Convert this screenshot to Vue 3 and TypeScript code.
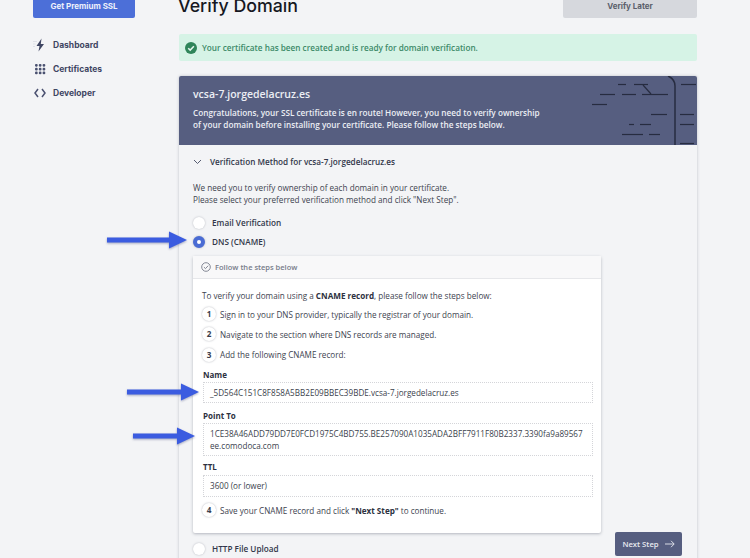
<script setup lang="ts">
const nav = ['Dashboard', 'Certificates', 'Developer']
const dots = [0, 1, 2].flatMap((r) => [0, 1, 2].map((c) => ({ x: 2 + c * 3.8, y: 2 + r * 3.8 })))
const artLines: [number, number, number, number][] = [
  [618, 84.5, 626, 84.5], [634, 84.5, 648, 84.5], [600, 94.5, 615, 94.5], [622, 94.5, 636, 94.5],
  [642, 94.5, 668, 94.5], [592, 104.5, 607, 104.5], [651, 114.5, 667, 114.5], [629, 124.5, 634, 124.5],
  [640, 124.5, 651, 124.5], [622, 134.5, 643, 134.5], [649, 134.5, 660, 134.5], [681, 84.5, 696, 84.5],
  [680, 114.5, 694, 114.5], [680, 124.5, 694, 124.5], [680, 143.5, 694, 143.5], [643, 85, 651, 94],
]
</script>

<template>
  <div class="page">
    <aside class="side">
      <div class="premium">Get Premium SSL</div>
      <nav class="nav">
        <div v-for="(item, i) in nav" :key="item" class="nav-item">
          <svg class="nav-icon" width="14" height="14" viewBox="0 0 14 14">
            <g v-if="i === 0">
              <path d="M8.500 0.500 3.500 8h3l-1 5.500L11 6H7.800z" fill="#3f4663" />
              <path d="M0 3.500h4M0 6h2.500M0 8.500h2" stroke="#dfe1e7" stroke-width="1.200" />
            </g>
            <g v-else-if="i === 1">
              <rect v-for="d in dots" :key="d.x + '-' + d.y" :x="d.x" :y="d.y" width="2.700" height="2.700" rx="1.100" fill="#4a5170" />
            </g>
            <g v-else fill="none" stroke="#4a5170" stroke-width="1.500">
              <path d="M5 3 2 7l3 4M9 3l3 4-3 4" />
            </g>
          </svg>
          <span>{{ item }}</span>
        </div>
      </nav>
    </aside>

    <main class="main">
      <div class="top">
        <h1>Verify Domain</h1>
        <div class="later">Verify Later</div>
      </div>

      <div class="alert">
        <svg width="12" height="12" viewBox="0 0 12 12">
          <circle cx="6" cy="6" r="6" fill="#2f855a" />
          <path d="M3.200 6.200 5.200 8.100 8.900 4.200" fill="none" stroke="#e6f7ef" stroke-width="1.500" />
        </svg>
        <span>Your certificate has been created and is ready for domain verification.</span>
      </div>

      <section class="card">
        <header class="hero">
          <h2>vcsa-7.jorgedelacruz.es</h2>
          <p>Congratulations, your SSL certificate is en route! However, you need to verify ownership<br />of your domain before installing your certificate. Please follow the steps below.</p>
          <svg class="art" width="518" height="69" viewBox="179 76 518 69">
            <g stroke="#272c40" stroke-width="1.200" fill="none">
              <line v-for="(l, i) in artLines" :key="i" :x1="l[0]" :y1="l[1]" :x2="l[2]" :y2="l[3]" />
              <path d="M668 76q7 3 7 10v59" stroke-width="1.500" />
            </g>
          </svg>
        </header>

        <div class="body">
          <div class="method">
            <svg width="9" height="6" viewBox="0 0 9 6"><path d="M1 1 4.500 4.500 8 1" fill="none" stroke="#555b70" stroke-width="1" /></svg>
            <span>Verification Method for vcsa-7.jorgedelacruz.es</span>
          </div>
          <p class="intro">We need you to verify ownership of each domain in your certificate.<br />Please select your preferred verification method and click "Next Step".</p>

          <label class="radio first"><i class="dot"></i>Email Verification</label>
          <label class="radio"><i class="dot on"></i>DNS (CNAME)</label>

          <div class="panel">
            <div class="panel-head">
              <svg width="10" height="10" viewBox="0 0 10 10">
                <circle cx="5" cy="5" r="4.300" fill="none" stroke="#777c8a" stroke-width="0.900" />
                <path d="M2.900 5.100 4.500 6.600 7.200 3.700" fill="none" stroke="#777c8a" stroke-width="0.900" />
              </svg>
              <span>Follow the steps below</span>
            </div>
            <div class="panel-body">
              <p class="lead">To verify your domain using a <b>CNAME record</b>, please follow the steps below:</p>
              <div class="step"><i>1</i><span>Sign in to your DNS provider, typically the registrar of your domain.</span></div>
              <div class="step"><i>2</i><span>Navigate to the section where DNS records are managed.</span></div>
              <div class="step"><i>3</i><span>Add the following CNAME record:</span></div>
              <div class="field-label name">Name</div>
              <div class="box">_5D564C151C8F858A5BB2E09BBEC39BDE.vcsa-7.jorgedelacruz.es</div>
              <div class="field-label point">Point To</div>
              <div class="box">1CE38A46ADD79DD7E0FCD1975C4BD755.BE257090A1035ADA2BFF7911F80B2337.3390fa9a89567<br />ee.comodoca.com</div>
              <div class="field-label">TTL</div>
              <div class="box">3600 (or lower)</div>
              <div class="step last"><i>4</i><span>Save your CNAME record and click <b>"Next Step"</b> to continue.</span></div>
            </div>
          </div>

          <div class="foot">
            <label class="radio"><i class="dot"></i>HTTP File Upload</label>
            <div class="next">
              Next Step
              <svg width="10" height="8" viewBox="0 0 10 8"><path d="M0 4h9M6 .8 9.200 4 6 7.200" fill="none" stroke="#e8eaf0" stroke-width="0.900" /></svg>
            </div>
          </div>
        </div>
      </section>
    </main>

    <svg class="arrow a1" width="82" height="20" viewBox="0 0 82 20"><path d="M1 7.500h62V1.500l18 8.500-18 8.500v-6H1z" fill="#3b5ce0" /></svg>
    <svg class="arrow a2" width="74" height="20" viewBox="0 0 74 20"><path d="M1 7.500h54V1.500l18 8.500-18 8.500v-6H1z" fill="#3b5ce0" /></svg>
    <svg class="arrow a3" width="64" height="20" viewBox="0 0 64 20"><path d="M1 7.500h44V1.500l18 8.500-18 8.500v-6H1z" fill="#3b5ce0" /></svg>
  </div>
</template>

<style>
html, body { margin: 0; background: #f3f4f6; }
</style>

<style scoped>
.page {
  position: relative;
  width: 750px;
  height: 558px;
  overflow: hidden;
  display: flex;
  background: #f3f4f6;
  font-family: "Open Sans", "Liberation Sans", sans-serif;
  color: #3b3f4d;
}
.side { width: 102px; margin-left: 33px; flex: none; }
.premium {
  height: 26px;
  margin-top: -8px;
  background: #4c6fd8;
  border-radius: 2px;
  color: #eef1fb;
  font: 700 8px/28px Inter, sans-serif;
  text-align: center;
}
.nav { margin-top: 19px; display: flex; flex-direction: column; gap: 8px; }
.nav-item {
  height: 16px;
  display: flex;
  align-items: center;
  gap: 6px;
  font: 700 8.500px/16px Inter, sans-serif;
  color: #3f4663;
}
.nav-icon { flex: none; }
.main { width: 518px; margin-left: 44px; flex: none; }
.top { display: flex; justify-content: space-between; height: 18px; }
h1 {
  margin: -9px 0 0 -1px;
  font: 500 17.800px/30px Inter, sans-serif;
  color: #16181f;
}
.later {
  width: 134px;
  height: 26px;
  margin-top: -8px;
  background: #d6d8dd;
  border-radius: 2px;
  color: #5b5f6b;
  font: 700 8px/28px Inter, sans-serif;
  text-align: center;
}
.alert {
  margin-top: 16px;
  height: 27px;
  display: flex;
  align-items: center;
  gap: 5px;
  padding-left: 6px;
  background: #d6f3e6;
  border-radius: 2px;
  color: #3c8a68;
  font-size: 8.200px;
  font-weight: 600;
}
.card {
  margin-top: 15px;
  background: #f3f4f6;
  box-shadow: 0 0 3px rgba(60, 65, 85, 0.3);
  height: 500px;
  border-radius: 2px;
}
.hero {
  position: relative;
  height: 69px;
  padding: 11px 14px 0;
  box-sizing: border-box;
  background: #565e80;
  border-radius: 2px 2px 0 0;
  color: #eceef4;
}
.hero h2 { margin: 0; font-size: 10.500px; font-weight: 600; line-height: 15px; }
.hero p { margin: 5px 0 0; font-size: 8.200px; font-weight: 600; line-height: 11.500px; }
.art { position: absolute; left: 0; top: 0; }
.body { padding: 0 14px; }
.method {
  height: 33px;
  display: flex;
  align-items: center;
  gap: 8px;
  font-size: 8.180px;
  font-weight: 600;
  color: #32374a;
}
.intro { margin: 4px 0 0; font-size: 8.170px; line-height: 12px; color: #40434f; }
.radio {
  height: 19px;
  display: flex;
  align-items: center;
  gap: 7px;
  font-size: 8.200px;
  font-weight: 600;
  color: #32374a;
}
.radio.first { margin-top: 7px; }
.dot {
  display: block;
  box-sizing: border-box;
  width: 12px;
  height: 12px;
  border-radius: 50%;
  background: #fff;
  box-shadow: 0 0 2px rgba(60, 65, 85, 0.35);
}
.dot.on { border: 4px solid #4a6cd4; }
.panel {
  width: 408px;
  margin-top: 5px;
  background: #fff;
  box-shadow: 0 1px 3px rgba(60, 65, 85, 0.35);
  border-radius: 2px;
}
.panel-head {
  height: 22px;
  display: flex;
  align-items: center;
  gap: 4px;
  padding-left: 8px;
  background: #f8f8f9;
  border-bottom: 1px solid #e6e7ea;
  color: #777c8a;
  font-size: 7.500px;
  font-weight: 600;
}
.panel-body { padding: 11px 9px 13px; font-size: 8.150px; color: #40434f; }
.lead { margin: 0 0 2px; line-height: 12px; }
.lead b, .step b { color: #2d3140; }
.step { height: 20.300px; display: flex; align-items: center; gap: 4px; }
.step i {
  width: 14px;
  height: 14px;
  flex: none;
  border-radius: 50%;
  background: #fff;
  box-shadow: 0 0 2px rgba(60, 65, 85, 0.4);
  font-style: normal;
  font-weight: 700;
  text-align: center;
  line-height: 14px;
  color: #3a3e4c;
}
.step.last { margin-top: 3px; }
.field-label {
  margin: 5px 0 3px 1px;
  font-size: 8px;
  font-weight: 700;
  line-height: 11px;
  color: #2d3140;
}
.field-label.name { margin: 4px 0 2px 1px; }
.field-label.point { margin: 7px 0 2px 1px; }
.box {
  width: 390px;
  margin-left: 1px;
  box-sizing: border-box;
  padding: 4px 6px;
  border: 1px dotted #d4d5d9;
  font-size: 8.150px;
  line-height: 11.500px;
  color: #3b3f4d;
}
.foot { display: flex; justify-content: space-between; align-items: flex-start; width: 489px; }
.foot .radio { margin-top: 6px; }
.next {
  width: 67px;
  height: 24px;
  margin-top: -1px;
  display: flex;
  align-items: center;
  justify-content: center;
  gap: 6px;
  background: #565e80;
  border-radius: 2px;
  color: #e8eaf0;
  font-size: 7.700px;
  font-weight: 600;
}
.arrow { position: absolute; filter: drop-shadow(0 1px 1px rgba(40, 50, 110, 0.4)); }
.a1 { left: 106px; top: 230px; }
.a2 { left: 126px; top: 382px; }
.a3 { left: 132px; top: 426px; }
</style>
